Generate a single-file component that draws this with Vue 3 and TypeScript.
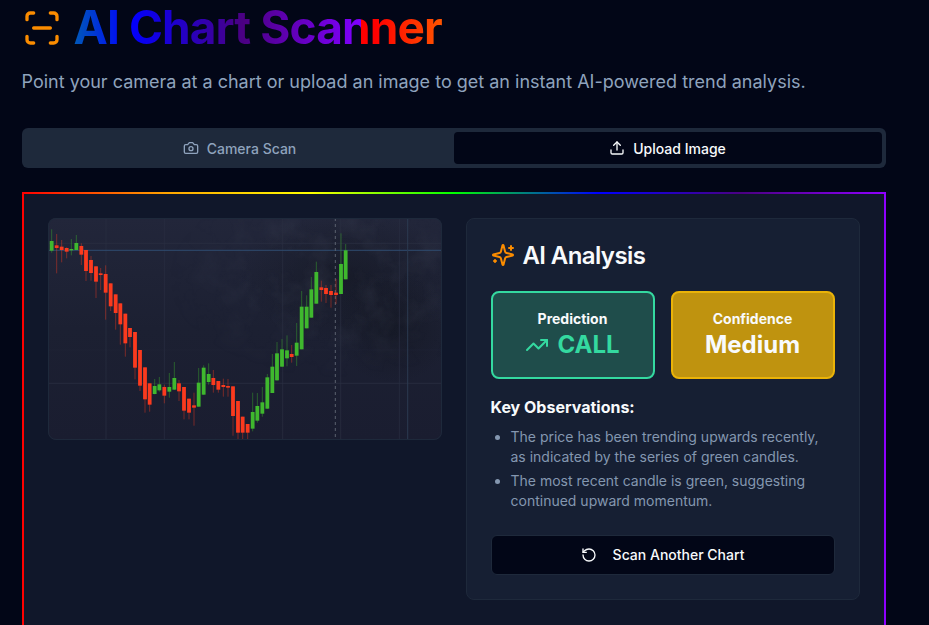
<script setup lang="ts">
type C = [number, number, number, number, number, number]
// [zoomX, wickTop, wickBottom, bodyTop, bodyBottom, bullish]
const left: C[] = [
  [35,58,128,93,122,1],[50,72,190,106,114,0],[65,90,157,110,120,0],[80,112,145,114,125,0],[94,87,136,117,121,1],
  [109,75,120,99,120,1],[124,100,165,108,134,0],[138,120,213,120,183,0],[153,138,212,150,189,0],[168,168,264,169,215,0],
  [182,174,240,190,195,0],[197,166,329,192,248,0],[212,220,303,220,289,0],[227,253,359,253,309,0],[241,280,404,280,343,0],
  [256,311,440,311,400,0],[270,354,412,354,381,0],[285,366,508,366,473,0],[300,420,543,420,527,0],[315,472,608,472,568,0],
  [329,520,605,520,584,0],[344,507,553,528,552,1],[358,501,545,523,541,1],[373,524,580,531,557,0],[388,489,563,531,545,1],
  [403,456,540,504,539,1],[417,510,573,520,544,0],[432,531,628,531,602,0],[447,566,628,566,608,0],[462,548,647,586,593,0],
  [476,474,590,518,590,1],[491,466,555,473,554,1],[506,460,524,492,516,1],[520,480,548,504,525,0],[535,513,548,513,539,0],
  [550,506,560,525,531,0],[564,507,560,528,533,0],[579,529,677,529,618,0],[594,573,687,573,668,0]
]
const right: C[] = [
  [8,620,687,620,668,0],[23,642,687,642,668,0],[38,548,664,606,656,1],[52,549,638,588,632,1],[67,531,620,577,611,1],
  [82,492,597,502,596,1],[97,432,549,470,549,1],[111,396,512,430,511,1],[126,387,471,418,470,1],[141,376,469,421,445,1],
  [155,405,458,432,441,0],[170,339,468,398,437,1],[185,243,418,290,418,1],[200,256,355,290,355,1],[214,201,323,238,323,1],
  [229,155,281,186,281,1],[244,212,275,232,240,0],[258,225,279,234,252,0],[273,225,293,243,255,0],[288,207,282,248,255,0],
  [303,70,252,162,252,1],[317,102,208,121,208,1]
]
const toCandle = (originX: number) => (c: C) => ({
  x: originX + c[0] / 3 - 48,
  wt: c[1] / 3 - 8,
  wh: (c[2] - c[1]) / 3,
  bt: c[3] / 3 - 8,
  bh: (c[4] - c[3]) / 3,
  color: c[5] ? '#3fb82e' : '#fb3a1e'
})
const candles = [...left.map(toCandle(40)), ...right.map(toCandle(240))]
const verticals = [58, 116.3, 234.7, 292.7, 351.3]
const horizontals = [25.3, 165.3]
</script>

<template>
  <div class="page">
    <header class="title-row">
      <svg class="scan" viewBox="0 0 24 24" fill="none" stroke="currentColor" stroke-width="2" stroke-linecap="round" stroke-linejoin="round">
        <path d="M3 7V5a2 2 0 0 1 2-2h2" /><path d="M17 3h2a2 2 0 0 1 2 2v2" /><path d="M21 17v2a2 2 0 0 1-2 2h-2" /><path d="M7 21H5a2 2 0 0 1-2-2v-2" /><path d="M7 12h10" />
      </svg>
      <h1>AI Chart Scanner</h1>
    </header>
    <p class="subtitle">Point your camera at a chart or upload an image to get an instant AI-powered trend analysis.</p>

    <div class="tabs">
      <div class="tab">
        <svg class="i16" viewBox="0 0 24 24" fill="none" stroke="currentColor" stroke-width="2" stroke-linecap="round" stroke-linejoin="round">
          <path d="M14.5 4h-5L7 7H4a2 2 0 0 0-2 2v9a2 2 0 0 0 2 2h16a2 2 0 0 0 2-2V9a2 2 0 0 0-2-2h-3l-2.5-3z" /><circle cx="12" cy="13" r="3" />
        </svg>
        Camera Scan
      </div>
      <div class="tab active">
        <svg class="i16" viewBox="0 0 24 24" fill="none" stroke="currentColor" stroke-width="2" stroke-linecap="round" stroke-linejoin="round">
          <path d="M21 15v4a2 2 0 0 1-2 2H5a2 2 0 0 1-2-2v-4" /><polyline points="17 8 12 3 7 8" /><line x1="12" y1="3" x2="12" y2="15" />
        </svg>
        Upload Image
      </div>
    </div>

    <section class="panel">
      <div class="chart">
        <svg viewBox="0 0 394 222" width="394" height="222">
          <defs>
            <radialGradient id="blob"><stop offset="0" stop-color="#12151f" stop-opacity=".55" /><stop offset="1" stop-color="#12151f" stop-opacity="0" /></radialGradient>
            <radialGradient id="fade"><stop offset="0" stop-color="#fff" /><stop offset=".6" stop-color="#fff" stop-opacity=".7" /><stop offset="1" stop-color="#fff" stop-opacity="0" /></radialGradient>
            <mask id="grain-mask"><ellipse cx="290" cy="60" rx="170" ry="100" fill="url(#fade)" /></mask>
            <linearGradient id="bg" x1="0" y1="0" x2="0" y2="1"><stop offset="0" stop-color="#22263a" /><stop offset=".5" stop-color="#1c2032" /><stop offset="1" stop-color="#1a1d30" /></linearGradient>
            <filter id="grain" x="0" y="0" width="100%" height="100%">
              <feTurbulence type="fractalNoise" baseFrequency="0.035" numOctaves="5" seed="7" />
              <feColorMatrix values="0 0 0 0 0.07  0 0 0 0 0.08  0 0 0 0 0.12  0 0 1.8 0 -0.75" />
            </filter>
          </defs>
          <rect width="394" height="222" fill="url(#bg)" />
          <ellipse cx="300" cy="60" rx="110" ry="65" fill="url(#blob)" />
          <ellipse cx="345" cy="110" rx="60" ry="55" fill="url(#blob)" />
          <g mask="url(#grain-mask)"><rect width="394" height="222" filter="url(#grain)" opacity=".3" /></g>
          <line v-for="x in verticals" :key="'v' + x" :x1="x" :x2="x" y1="0" y2="222" stroke="#2a2f42" stroke-width="1" opacity=".75" />
          <line v-for="y in horizontals" :key="'h' + y" x1="0" x2="394" :y1="y" :y2="y" stroke="#2a2f42" stroke-width="1" opacity=".8" />
          <line x1="0" x2="394" y1="132" y2="132" stroke="#2a2f42" stroke-width="1" opacity=".2" />
          <line x1="0" x2="394" y1="32.3" y2="32.3" stroke="#2f4c70" stroke-width="1" />
          <line x1="359.7" x2="359.7" y1="0" y2="222" stroke="#2c3a50" stroke-width="1" />
          <line x1="287.3" x2="287.3" y1="0" y2="222" stroke="#5c6270" stroke-width="1" stroke-dasharray="3 3" />
          <g v-for="(c, i) in candles" :key="i">
            <rect :x="c.x - 0.5" :y="c.wt" width="1" :height="c.wh" :fill="c.color" opacity=".42" />
            <rect :x="c.x - 1.9" :y="c.bt" width="3.8" :height="c.bh" :fill="c.color" />
          </g>
        </svg>
      </div>

      <div class="card">
        <h2>
          <svg class="i24 orange" viewBox="0 0 24 24" fill="none" stroke="currentColor" stroke-width="2" stroke-linecap="round" stroke-linejoin="round">
            <path d="M9.937 15.5A2 2 0 0 0 8.5 14.063l-6.135-1.582a.5.5 0 0 1 0-.962L8.5 9.936A2 2 0 0 0 9.937 8.5l1.582-6.135a.5.5 0 0 1 .963 0L14.063 8.5A2 2 0 0 0 15.5 9.937l6.135 1.581a.5.5 0 0 1 0 .964L15.5 14.063a2 2 0 0 0-1.437 1.437l-1.582 6.135a.5.5 0 0 1-.963 0z" />
            <path d="M20 3v4" /><path d="M22 5h-4" /><path d="M4 17v2" /><path d="M5 18H3" />
          </svg>
          AI Analysis
        </h2>
        <div class="stats">
          <div class="stat call">
            <div class="label">Prediction</div>
            <div class="value green">
              <svg class="i24" viewBox="0 0 24 24" fill="none" stroke="currentColor" stroke-width="2" stroke-linecap="round" stroke-linejoin="round">
                <polyline points="22 7 13.5 15.5 8.5 10.5 2 17" /><polyline points="16 7 22 7 22 13" />
              </svg>
              CALL
            </div>
          </div>
          <div class="stat medium">
            <div class="label">Confidence</div>
            <div class="value">Medium</div>
          </div>
        </div>
        <h3>Key Observations:</h3>
        <ul>
          <li>The price has been trending upwards recently, as indicated by the series of green candles.</li>
          <li>The most recent candle is green, suggesting continued upward momentum.</li>
        </ul>
        <button class="again" type="button">
          <svg class="i16" viewBox="0 0 24 24" fill="none" stroke="currentColor" stroke-width="2" stroke-linecap="round" stroke-linejoin="round">
            <path d="M3 12a9 9 0 1 0 9-9 9.75 9.75 0 0 0-6.74 2.74L3 8" /><path d="M3 3v5h5" />
          </svg>
          Scan Another Chart
        </button>
      </div>
    </section>
  </div>
</template>

<style>
html, body { margin: 0; background: #020617; overflow: hidden; }
</style>

<style scoped>
.page {
  box-sizing: border-box;
  height: 625px;
  overflow: hidden;
  padding: 4px 43.5px 0 21.5px;
  background: #020617;
  color: #f8fafc;
  font-family: Inter, "Liberation Sans", sans-serif;
}
.title-row { display: flex; align-items: center; gap: 12px; height: 48px; }
.scan { width: 40px; height: 40px; color: #fb8c00; flex: none; }
h1 {
  margin: 0;
  font-size: 46px;
  line-height: 48px;
  padding-bottom: 2px;
  font-weight: 700;
  letter-spacing: -0.9px;
  color: transparent;
  background: linear-gradient(to right, #0059b8 0%, #0000ff 15%, #4b0082 46%, #8000ff 78%, #ff0000 78%, #ff0000 82%, #ff5500 100%);
  -webkit-background-clip: text;
  background-clip: text;
}
.subtitle { margin: 16px 0 32px; font-size: 18px; line-height: 28px; color: #8fa3bd; }
.tabs {
  display: grid;
  grid-template-columns: 1fr 1fr;
  box-sizing: border-box;
  height: 40px;
  padding: 4px;
  background: #1e293b;
  border-radius: 6px;
}
.tab {
  display: flex;
  align-items: center;
  justify-content: center;
  gap: 8px;
  font-size: 14px;
  font-weight: 500;
  color: #8fa3bd;
  border-radius: 4px;
}
.tab.active { background: #020617; color: #f8fafc; }
.i16 { width: 16px; height: 16px; flex: none; }
.i24 { width: 24px; height: 24px; flex: none; }
.panel {
  display: grid;
  grid-template-columns: 394px 394px;
  gap: 24px;
  align-items: start;
  margin-top: 24px;
  padding: 24px;
  height: 500px;
  box-sizing: border-box;
  background: #10172a;
  border: 2px solid;
  border-image: linear-gradient(to right, #ff0000, #ffa500, #ffff00, #00ff00, #0000ff, #4b0082, #8f00ff) 1;
}
.chart {
  height: 222px;
  border-radius: 8px;
  overflow: hidden;
  outline: 1px solid #1e293b;
  outline-offset: -1px;
  position: relative;
}
.chart svg { display: block; }
.card {
  box-sizing: border-box;
  height: 382px;
  padding: 24px;
  background: #161f33;
  border: 1px solid #1e293b;
  border-radius: 8px;
}
h2 {
  display: flex;
  align-items: center;
  gap: 8px;
  height: 24px;
  margin: 0 0 24px;
  font-size: 24px;
  font-weight: 600;
  letter-spacing: -0.6px;
}
.orange { color: #fb8c00; }
.stats { display: grid; grid-template-columns: 1fr 1fr; gap: 16px; }
.stat {
  box-sizing: border-box;
  height: 88px;
  padding: 16px;
  border: 2px solid;
  border-radius: 8px;
  text-align: center;
}
.call { background: #1f4d4b; border-color: #34d9a0; }
.medium { background: #bf930f; border-color: #eab308; }
.label { font-size: 14px; line-height: 20px; font-weight: 700; }
.value {
  display: flex;
  align-items: center;
  justify-content: center;
  gap: 8px;
  font-size: 24px;
  line-height: 32px;
  font-weight: 700;
}
.green { color: #34d9a0; }
h3 { margin: 16px 0 8px; font-size: 16px; line-height: 24px; font-weight: 700; }
ul { margin: 0 0 24px; padding: 0 0 0 20px; list-style: disc; color: #8497b0; font-size: 14px; line-height: 20px; }
li + li { margin-top: 4px; }
.again {
  display: flex;
  align-items: center;
  justify-content: center;
  gap: 16px;
  width: 100%;
  height: 40px;
  padding-bottom: 2px;
  background: #020617;
  border: 1px solid #1e293b;
  border-radius: 6px;
  color: #f8fafc;
  font: 500 14px Inter, "Liberation Sans", sans-serif;
}
</style>
